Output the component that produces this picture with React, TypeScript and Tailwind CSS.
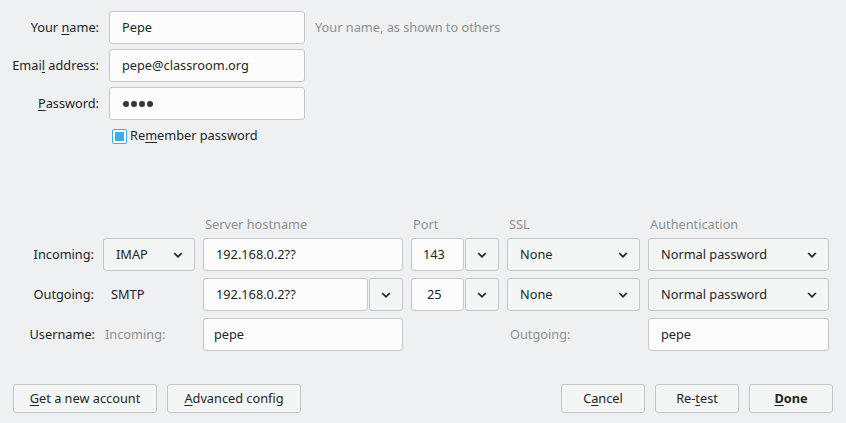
import { ReactNode } from "react";

const font = { fontFamily: '"Noto Sans", "Open Sans", sans-serif' };

function Chevron() {
  return (
    <svg width="10" height="6" viewBox="0 0 10 6" className="shrink-0">
      <path d="M1.2 1 L5 4.8 L8.8 1" fill="none" stroke="#232627" strokeWidth="1.7" />
    </svg>
  );
}

function U({ children }: { children: ReactNode }) {
  return <span className="underline underline-offset-[2px] decoration-1">{children}</span>;
}

function Field({ children, w, className = "" }: { children: ReactNode; w: string; className?: string }) {
  return (
    <div
      className={`${w} h-[33px] shrink-0 flex items-center rounded-[3px] border border-[#c6c7c8] bg-[#fcfcfc] text-[#232627] ${className}`}
    >
      {children}
    </div>
  );
}

function Select({ value, w }: { value: string; w: string }) {
  return (
    <div
      className={`${w} h-[33px] shrink-0 flex items-center justify-between pl-[12px] pr-[11px] rounded-[3px] border border-[#c6c7c8] bg-[#f4f5f5] text-[#232627]`}
    >
      <span>{value}</span>
      <Chevron />
    </div>
  );
}

function DropBtn() {
  return (
    <div className="w-[34px] h-[33px] shrink-0 flex items-center justify-center rounded-[3px] border border-[#c6c7c8] bg-[#f4f5f5]">
      <Chevron />
    </div>
  );
}

function Button({ children, w, bold = false }: { children: ReactNode; w: string; bold?: boolean }) {
  return (
    <div
      className={`${w} h-[29px] flex items-center justify-center rounded-[3px] border border-[#c6c7c8] bg-[#f4f5f5] text-[#232627] ${bold ? "font-bold" : ""}`}
    >
      {children}
    </div>
  );
}

export default function App() {
  return (
    <div
      className="w-[846px] h-[423px] bg-[#eff0f1] text-[12.75px] text-[#232627] flex flex-col overflow-hidden"
      style={font}
    >
      {/* ── Identity ── */}
      <div className="flex flex-col gap-[5px] pt-[11px]">
        <div className="flex items-center">
          <div className="w-[99px] text-right">
            Your <U>n</U>ame:
          </div>
          <Field w="w-[196px]" className="ml-[10px] px-[12px]">
            Pepe
          </Field>
          <div className="ml-[10px] text-[#8e9091]">Your name, as shown to others</div>
        </div>
        <div className="flex items-center">
          <div className="w-[99px] text-right">
            Emai<U>l</U> address:
          </div>
          <Field w="w-[196px]" className="ml-[10px] px-[12px]">
            pepe@classroom.org
          </Field>
        </div>
        <div className="flex items-center">
          <div className="w-[99px] text-right">
            <U>P</U>assword:
          </div>
          <Field w="w-[196px]" className="ml-[10px] px-[13px] gap-[2px]">
            <span className="w-[6px] h-[6px] rounded-full bg-[#31363b]" />
            <span className="w-[6px] h-[6px] rounded-full bg-[#31363b]" />
            <span className="w-[6px] h-[6px] rounded-full bg-[#31363b]" />
            <span className="w-[6px] h-[6px] rounded-full bg-[#31363b]" />
          </Field>
        </div>
        <div className="flex items-center h-[18px] mt-[2px] ml-[112px] gap-[3px]">
          <div className="w-[15px] h-[15px] rounded-[2px] border border-[#3daee9] bg-white p-[2px]">
            <div className="w-full h-full bg-[#3daee9]" />
          </div>
          <span>
            Re<U>m</U>ember password
          </span>
        </div>
      </div>

      {/* ── Server settings ── */}
      <div className="mt-[70px] flex flex-col">
        <div className="flex h-[20px] items-center text-[#8e9091]">
          <div className="w-[205px]" />
          <div className="w-[208px]">Server hostname</div>
          <div className="w-[96px]">Port</div>
          <div className="w-[141px]">SSL</div>
          <div>Authentication</div>
        </div>
        <div className="flex items-center gap-[8px] mt-[3px]">
          <div className="w-[95px] text-right pr-[1px]">Incoming:</div>
          <Select value="IMAP" w="w-[92px]" />
          <Field w="w-[200px]" className="px-[12px]">
            192.168.0.2??
          </Field>
          <div className="flex gap-[1px]">
            <Field w="w-[53px]" className="px-[11px]">
              143
            </Field>
            <DropBtn />
          </div>
          <Select value="None" w="w-[133px]" />
          <Select value="Normal password" w="w-[181px]" />
        </div>
        <div className="flex items-center gap-[8px] mt-[7px]">
          <div className="w-[95px] text-right pr-[1px]">Outgoing:</div>
          <div className="w-[92px] pl-[8px]">SMTP</div>
          <div className="flex gap-[1px]">
            <Field w="w-[165px]" className="px-[12px]">
              192.168.0.2??
            </Field>
            <DropBtn />
          </div>
          <div className="flex gap-[1px]">
            <Field w="w-[53px]" className="px-[15px]">
              25
            </Field>
            <DropBtn />
          </div>
          <Select value="None" w="w-[133px]" />
          <Select value="Normal password" w="w-[181px]" />
        </div>
        <div className="flex items-center gap-[8px] mt-[7px]">
          <div className="w-[95px] text-right">Username:</div>
          <div className="w-[92px] pl-[2px] text-[#8e9091]">Incoming:</div>
          <Field w="w-[200px]" className="px-[10px]">
            pepe
          </Field>
          <div className="w-[88px]" />
          <div className="w-[133px] pl-[3px] text-[#8e9091]">Outgoing:</div>
          <Field w="w-[181px]" className="px-[12px]">
            pepe
          </Field>
        </div>
      </div>

      {/* ── Buttons ── */}
      <div className="mt-auto mb-[10px] flex items-center pl-[13px] pr-[13px]">
        <div className="flex gap-[10px]">
          <Button w="w-[144px]">
            <span>
              <U>G</U>et a new account
            </span>
          </Button>
          <Button w="w-[134px]">
            <span>
              <U>A</U>dvanced config
            </span>
          </Button>
        </div>
        <div className="ml-auto flex gap-[10px]">
          <Button w="w-[84px]">
            <span>
              C<U>a</U>ncel
            </span>
          </Button>
          <Button w="w-[84px]">
            <span>
              Re-<U>t</U>est
            </span>
          </Button>
          <Button w="w-[84px]" bold>
            <span>
              <U>D</U>one
            </span>
          </Button>
        </div>
      </div>
    </div>
  );
}
